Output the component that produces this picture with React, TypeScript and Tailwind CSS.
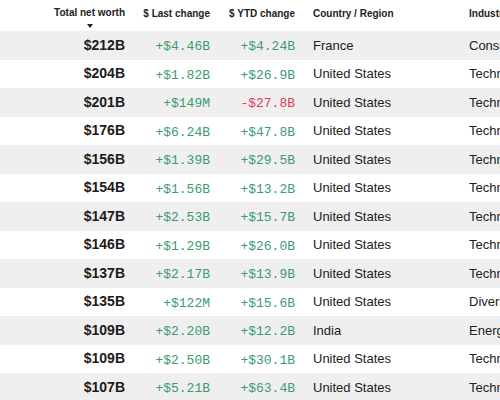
const rows = [
  ['$212B', '+$4.46B', '+$4.24B', 'France', 'Consumer'],
  ['$204B', '+$1.82B', '+$26.9B', 'United States', 'Technology'],
  ['$201B', '+$149M', '-$27.8B', 'United States', 'Technology'],
  ['$176B', '+$6.24B', '+$47.8B', 'United States', 'Technology'],
  ['$156B', '+$1.39B', '+$29.5B', 'United States', 'Technology'],
  ['$154B', '+$1.56B', '+$13.2B', 'United States', 'Technology'],
  ['$147B', '+$2.53B', '+$15.7B', 'United States', 'Technology'],
  ['$146B', '+$1.29B', '+$26.0B', 'United States', 'Technology'],
  ['$137B', '+$2.17B', '+$13.9B', 'United States', 'Technology'],
  ['$135B', '+$122M', '+$15.6B', 'United States', 'Diversified'],
  ['$109B', '+$2.20B', '+$12.2B', 'India', 'Energy'],
  ['$109B', '+$2.50B', '+$30.1B', 'United States', 'Technology'],
  ['$107B', '+$5.21B', '+$63.4B', 'United States', 'Technology'],
];

const sans = 'font-["Liberation_Sans",Arial,sans-serif]';
const mono = 'font-["Liberation_Mono","Courier_New",monospace]';

function Change({ v }: { v: string }) {
  const neg = v.startsWith('-');
  return <span className={`${mono} text-[13px] ${neg ? 'text-[#e23b52]' : 'text-[#3b9c70]'}`}>{v}</span>;
}

export default function App() {
  const grid = 'grid grid-cols-[125px_85px_85px_174px_1fr] items-center';
  return (
    <div className={`w-[500px] h-[400px] overflow-hidden bg-white text-[#1c1c1c] ${sans}`}>
      <div className={`${grid} h-[31px] text-[10px] font-bold text-[#222]`}>
        <div className="flex justify-end">
          <div className="flex flex-col items-center pt-[4px]">
            <span className="leading-[12px]">Total net worth</span>
            <span className="mt-[5px] w-0 h-0 border-x-[3px] border-x-transparent border-t-[4px] border-t-[#222]" />
          </div>
        </div>
        <div className="text-right pb-[5px]">$ Last change</div>
        <div className="text-right pb-[5px]">$ YTD change</div>
        <div className="pl-[18px] pb-[5px]">Country / Region</div>
        <div className="whitespace-nowrap pb-[5px]">Industry</div>
      </div>
      {rows.map((r, i) => (
        <div key={i} className={`${grid} h-[28.5px] ${i % 2 === 0 ? 'bg-[#efefef]' : 'bg-white'}`}>
          <div className="text-right text-[14px] font-bold">{r[0]}</div>
          <div className="text-right"><Change v={r[1]} /></div>
          <div className="text-right"><Change v={r[2]} /></div>
          <div className="pl-[18px] text-[13px] text-[#222]">{r[3]}</div>
          <div className="text-[13px] text-[#222] whitespace-nowrap">{r[4]}</div>
        </div>
      ))}
    </div>
  );
}
